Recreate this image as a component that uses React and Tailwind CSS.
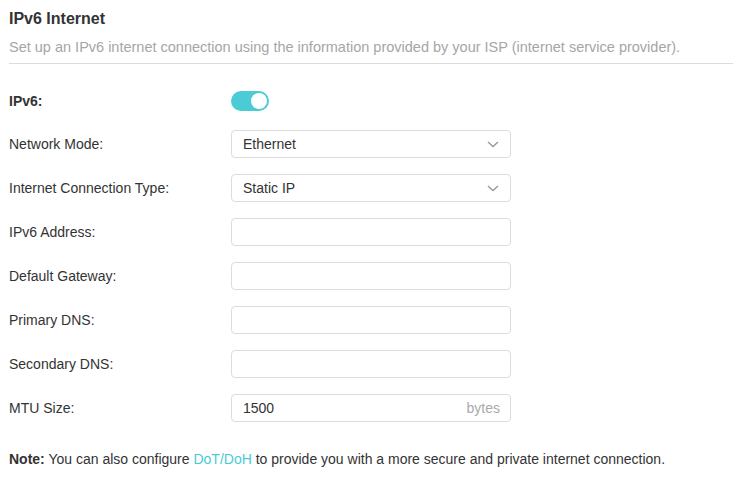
import React from "react";

const fields = [
    { label: "IPv6 Address:" },
    { label: "Default Gateway:" },
    { label: "Primary DNS:" },
    { label: "Secondary DNS:" },
];

const Chevron = () => (
    <svg width="14" height="14" viewBox="0 0 14 14" fill="none" className="text-[#999]">
        <path d="M2 5l5 4.5L12 5" stroke="currentColor" strokeWidth="1.4" />
    </svg>
);

const Row = ({ label, bold = false, h = "h-[44px]", children }) => (
    <div className={`flex items-center ${h}`}>
        <div className={`w-[222px] text-[14px] text-[#333] ${bold ? "font-bold" : ""}`}>
            {label}
        </div>
        {children}
    </div>
);

const Box = ({ children }) => (
    <div className="w-[280px] h-[28px] rounded-[4px] border border-[#dcdcdc] bg-white flex items-center justify-between pl-[11px] pr-[10px] text-[14px] text-[#333]">
        {children}
    </div>
);

export default function App() {
    return (
        <div
            className="w-[740px] h-[480px] bg-white px-[9px] pt-[9px]"
            style={{ fontFamily: '"Liberation Sans", Arial, sans-serif' }}
        >
            <h2 className="text-[16px] font-bold text-[#333] leading-[20px]">IPv6 Internet</h2>
            <p className="mt-[10px] text-[14.5px] text-[#a6a6a6] leading-[17px]">
                Set up an IPv6 internet connection using the information provided by your ISP
                (internet service provider).
            </p>
            <div className="mt-[7px] mr-[-2px] border-t border-[#dcdcdc]" />

            <div className="mt-[16px] flex flex-col">
                <Row label="IPv6:" bold h="h-[42px]">
                    <div className="w-[38px] h-[20px] rounded-full bg-[#4acbd6] flex items-center justify-end pr-[2px]">
                        <div className="w-[16px] h-[16px] rounded-full bg-white" />
                    </div>
                </Row>
                <Row label="Network Mode:">
                    <Box>
                        <span>Ethernet</span>
                        <Chevron />
                    </Box>
                </Row>
                <Row label="Internet Connection Type:">
                    <Box>
                        <span>Static IP</span>
                        <Chevron />
                    </Box>
                </Row>
                {fields.map((f) => (
                    <Row key={f.label} label={f.label}>
                        <Box />
                    </Row>
                ))}
                <Row label="MTU Size:">
                    <Box>
                        <span>1500</span>
                        <span className="text-[#aaa]">bytes</span>
                    </Box>
                </Row>
            </div>

            <p className="mt-[19px] text-[14px] text-[#333]">
                <span className="font-bold">Note:</span> You can also configure{" "}
                <span className="text-[#4acbd6]">DoT/DoH</span> to provide you with a more secure
                and private internet connection.
            </p>
        </div>
    );
}
